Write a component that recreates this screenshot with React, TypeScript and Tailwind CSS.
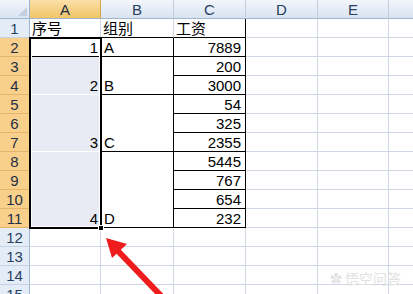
const cellFont = { fontFamily: '"Liberation Sans", "Noto Sans CJK SC", sans-serif' };

function ColHeader({ label, selected, last }: { label: string; selected?: boolean; last?: boolean }) {
  return (
    <div
      className={`h-[19px] flex items-center justify-center border-b border-[#9eb6ce] text-[15px] leading-none ${
        last ? '' : 'border-r'
      } ${
        selected
          ? 'bg-gradient-to-b from-[#fbe0a8] to-[#f2c466] border-r-[#d6a648] text-[#1f2f45]'
          : 'bg-gradient-to-b from-[#f2f6fb] to-[#d9e3f1] border-r-[#c0cee0] text-[#27415f]'
      }`}
    >
      {label}
    </div>
  );
}

function RowHeader({ n, selected }: { n: number; selected?: boolean }) {
  return (
    <div
      className={`h-[19px] flex items-center justify-center border-r border-b text-[15px] leading-none ${
        selected
          ? 'bg-[#f8d08c] border-r-[#c9954a] border-b-[#e3b46a] text-[#1f2f45]'
          : 'bg-[#e4ecf7] border-r-[#9eb6ce] border-b-[#c5d3e5] text-[#27415f]'
      }`}
    >
      {n}
    </div>
  );
}

function Empty({ count, noRight }: { count: number; noRight?: boolean }) {
  return (
    <>
      {Array.from({ length: count }).map((_, i) => (
        <div
          key={i}
          className={`h-[19px] border-b border-[#d0d7e5] ${noRight ? '' : 'border-r'}`}
        />
      ))}
    </>
  );
}

export default function App() {
  const rows = [1, 2, 3, 4, 5, 6, 7, 8, 9, 10, 11, 12, 13, 14, 15];
  const salaries = ['7889', '200', '3000', '54', '325', '2355', '5445', '767', '654', '232'];

  return (
    <div className="relative w-[413px] h-[294px] overflow-hidden bg-white" style={cellFont}>
      <div className="flex">
        {/* row headers */}
        <div className="w-[30px] shrink-0 flex flex-col">
          <div className="h-[19px] relative bg-gradient-to-b from-[#f2f6fb] to-[#d9e3f1] border-r border-b border-[#9eb6ce]">
            <div className="absolute right-[2px] bottom-[2px] w-0 h-0 border-l-[9px] border-l-transparent border-b-[9px] border-b-[#c3cfdf]" />
          </div>
          {rows.map((n) => (
            <RowHeader key={n} n={n} selected={n >= 2 && n <= 11} />
          ))}
        </div>

        {/* column A */}
        <div className="w-[71px] shrink-0 flex flex-col text-[15px] text-black">
          <ColHeader label="A" selected />
          <div className="h-[19px] border-r border-[#d0d7e5] border-b border-b-black flex items-end pl-[2px] leading-[17px]">
            序号
          </div>
          <div className="h-[19px] bg-white border-b border-black flex items-end justify-end pr-[3px] leading-[17px]">1</div>
          <div className="h-[38px] bg-[#e8ebf4] border-b border-white flex items-end justify-end pr-[3px] leading-[17px]">2</div>
          <div className="h-[57px] bg-[#e8ebf4] border-b border-white flex items-end justify-end pr-[3px] leading-[17px]">3</div>
          <div className="h-[76px] bg-[#e8ebf4] border-b border-black flex items-end justify-end pr-[3px] leading-[17px]">4</div>
          <Empty count={4} />
        </div>

        {/* column B */}
        <div className="w-[73px] shrink-0 flex flex-col text-[15px] text-black">
          <ColHeader label="B" />
          <div className="h-[19px] border-r border-[#d0d7e5] border-b border-b-black flex items-end pl-[2px] leading-[17px]">
            组别
          </div>
          <div className="h-[19px] border-r border-b border-black flex items-end pl-[3px] leading-[17px]">A</div>
          <div className="h-[38px] border-r border-b border-black flex items-end pl-[3px] leading-[17px]">B</div>
          <div className="h-[57px] border-r border-b border-black flex items-end pl-[3px] leading-[17px]">C</div>
          <div className="h-[76px] border-r border-b border-black flex items-end pl-[3px] leading-[17px]">D</div>
          <Empty count={4} />
        </div>

        {/* column C */}
        <div className="w-[72px] shrink-0 flex flex-col text-[15px] text-black">
          <ColHeader label="C" />
          <div className="h-[19px] border-r border-black border-b flex items-end pl-[2px] leading-[17px]">
            工资
          </div>
          {salaries.map((s) => (
            <div
              key={s}
              className="h-[19px] border-r border-b border-black flex items-end justify-end pr-[4px] leading-[17px]"
            >
              {s}
            </div>
          ))}
          <Empty count={4} />
        </div>

        {/* column D */}
        <div className="w-[72px] shrink-0 flex flex-col">
          <ColHeader label="D" />
          <Empty count={15} />
        </div>

        {/* column E */}
        <div className="w-[71px] shrink-0 flex flex-col">
          <ColHeader label="E" />
          <Empty count={15} />
        </div>

        {/* column F (partial) */}
        <div className="flex-1 flex flex-col">
          <ColHeader label="" last />
          <Empty count={15} noRight />
        </div>
      </div>

      {/* selection outline A2:A11 */}
      <div className="absolute left-[29px] top-[37px] w-[73px] h-[192px] border-2 border-black pointer-events-none">
        <div className="w-full h-full border border-white" />
      </div>
      {/* fill handle */}
      <div className="absolute left-[98px] top-[225px] w-[6px] h-[6px] bg-black border border-white" />

      {/* red arrow */}
      <svg className="absolute left-0 top-0 pointer-events-none" width="413" height="294" viewBox="0 0 413 294">
        <line x1="165" y1="300" x2="118" y2="251" stroke="#ee1c1c" strokeWidth="6" />
        <polygon points="106,238 127,244 112,258" fill="#ee1c1c" />
      </svg>

      {/* watermark */}
      <div className="absolute left-[330px] top-[268px] flex items-center gap-[3px] text-[14px] text-[#e2e2e2]" style={{ fontFamily: '"Noto Sans CJK SC", sans-serif' }}>
        <span className="text-[12px]">✿</span>
        <span>悟空问答</span>
      </div>
    </div>
  );
}
